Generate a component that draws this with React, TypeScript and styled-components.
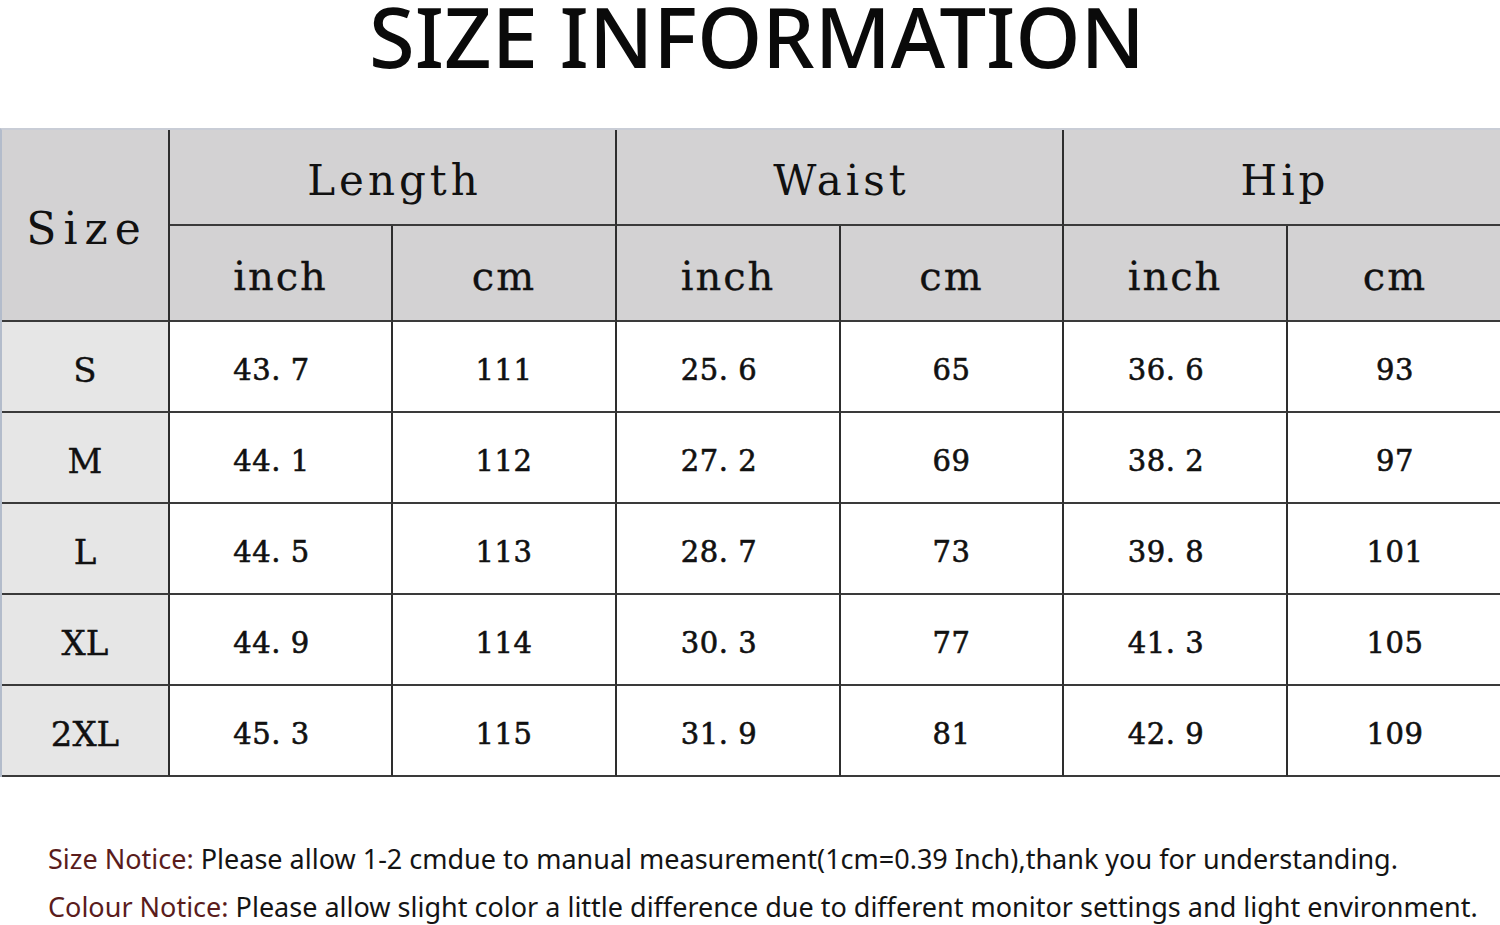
import * as React from 'react';
import styled, { createGlobalStyle } from 'styled-components';

const GlobalStyle = createGlobalStyle`
  html, body {
    margin: 0;
    padding: 0;
    background: #ffffff;
  }
  body {
    font-family: 'Noto Sans', 'Liberation Sans', sans-serif;
  }
`;

const Page = styled.div`
  width: 1500px;
  height: 925px;
  overflow: hidden;
  display: flex;
  flex-direction: column;
`;

const Title = styled.h1`
  margin: 0 0 56px;
  height: 72px;
  font-family: 'Noto Sans', 'Liberation Sans', sans-serif;
  font-weight: 500;
  font-size: 83px;
  line-height: 72px;
  text-align: center;
  color: #0a0a0a;
  padding-left: 14px;
`;

const Table = styled.div`
  display: grid;
  grid-template-columns: 168px 223px 224px 224px 223px 224px 214px;
  grid-template-rows: 96px 96px repeat(5, 91px);
  border-top: 2px solid #c9cdd6;
  border-left: 2px solid #b3bccb;
  box-sizing: border-box;
  width: 1500px;
  font-family: 'DejaVu Serif', 'Liberation Serif', serif;
  color: #111;
`;

const Cell = styled.div<{ $head?: boolean; $side?: boolean; $last?: boolean }>`
  box-sizing: border-box;
  display: flex;
  align-items: center;
  justify-content: center;
  padding-top: 6px;
  background: ${({ $head, $side }) => ($head ? '#d3d2d3' : $side ? '#e6e6e6' : '#ffffff')};
  border-right: ${({ $last }) => ($last ? 'none' : '2px solid #2e2e2e')};
  border-bottom: 2px solid #3a3a3a;
`;

const SizeHead = styled(Cell)`
  grid-row: 1 / span 2;
  font-size: 44px;
  letter-spacing: 7px;
  padding-left: 4px;
`;

const GroupHead = styled(Cell)`
  grid-column: span 2;
  font-size: 42px;
  letter-spacing: 4px;
  padding-left: 4px;
`;

const UnitHead = styled(Cell)`
  font-size: 40px;
  letter-spacing: 2px;
  -webkit-text-stroke: 0.3px #111;
`;

const SizeLabel = styled(Cell)`
  font-size: 34px;
  -webkit-text-stroke: 0.4px #111;
`;

const Value = styled(Cell)<{ $dec?: boolean }>`
  font-size: 29px;
  -webkit-text-stroke: 0.6px #111;
  letter-spacing: 0.5px;
  padding-right: ${({ $dec }) => ($dec ? '18px' : '0')};
`;

const Notes = styled.div`
  margin-top: 64px;
  padding-left: 48px;
  display: flex;
  flex-direction: column;
  gap: 12px;
  font-family: 'Noto Sans', 'Liberation Sans', sans-serif;
  font-size: 27px;
  line-height: 36px;
  color: #141414;
`;

const Label = styled.span`
  color: #5a1c1c;
`;

const groups = ['Length', 'Waist', 'Hip'];

const rows = [
  ['S', '43. 7', '111', '25. 6', '65', '36. 6', '93'],
  ['M', '44. 1', '112', '27. 2', '69', '38. 2', '97'],
  ['L', '44. 5', '113', '28. 7', '73', '39. 8', '101'],
  ['XL', '44. 9', '114', '30. 3', '77', '41. 3', '105'],
  ['2XL', '45. 3', '115', '31. 9', '81', '42. 9', '109'],
];

export default function App() {
  return (
    <Page>
      <GlobalStyle />
      <Title>SIZE INFORMATION</Title>
      <Table>
        <SizeHead $head>Size</SizeHead>
        {groups.map((g, i) => (
          <GroupHead key={g} $head $last={i === groups.length - 1}>
            {g}
          </GroupHead>
        ))}
        {groups.map((g, i) => (
          <React.Fragment key={g}>
            <UnitHead $head>inch</UnitHead>
            <UnitHead $head $last={i === groups.length - 1}>cm</UnitHead>
          </React.Fragment>
        ))}
        {rows.map((row) =>
          row.map((v, j) =>
            j === 0 ? (
              <SizeLabel key={row[0] + j} $side>{v}</SizeLabel>
            ) : (
              <Value key={row[0] + j} $dec={j % 2 === 1} $last={j === row.length - 1}>{v}</Value>
            )
          )
        )}
      </Table>
      <Notes>
        <div>
          <Label>Size Notice:</Label> Please allow 1-2 cmdue to manual measurement(1cm=0.39 Inch),thank you for understanding.
        </div>
        <div>
          <Label>Colour Notice:</Label> Please allow slight color a little difference due to different monitor settings and light environment.
        </div>
      </Notes>
    </Page>
  );
}
